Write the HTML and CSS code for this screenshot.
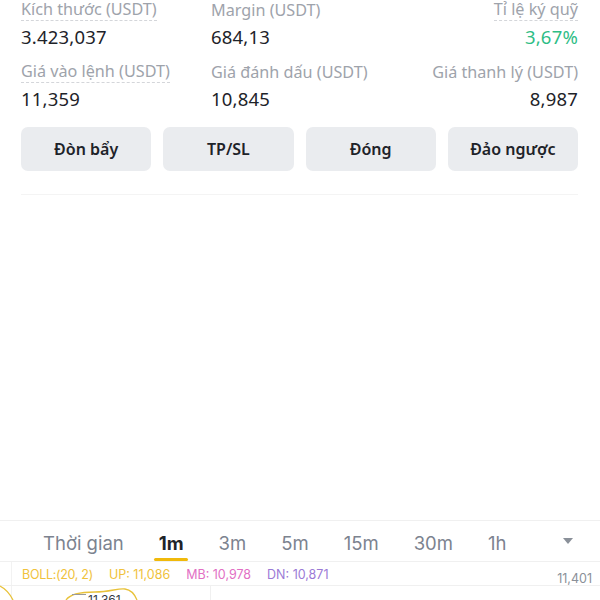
FILE: index.html
```html
<!DOCTYPE html>
<html lang="vi">
<head>
<meta charset="utf-8">
<link rel="stylesheet" href="styles.css">
</head>
<body>
<div class="page">
  <section class="stats">
    <div class="stat">
      <div class="label dotted">Kích thước (USDT)</div>
      <div class="value">3.423,037</div>
    </div>
    <div class="stat">
      <div class="label">Margin (USDT)</div>
      <div class="value">684,13</div>
    </div>
    <div class="stat right">
      <div class="label dotted">Tỉ lệ ký quỹ</div>
      <div class="value green">3,67%</div>
    </div>
    <div class="stat">
      <div class="label dotted">Giá vào lệnh (USDT)</div>
      <div class="value">11,359</div>
    </div>
    <div class="stat">
      <div class="label">Giá đánh dấu (USDT)</div>
      <div class="value">10,845</div>
    </div>
    <div class="stat right">
      <div class="label">Giá thanh lý (USDT)</div>
      <div class="value">8,987</div>
    </div>
  </section>
  <section class="actions">
    <button class="btn">Đòn bẩy</button>
    <button class="btn">TP/SL</button>
    <button class="btn">Đóng</button>
    <button class="btn">Đảo ngược</button>
  </section>
  <div class="divider"></div>
  <div class="spacer"></div>
  <nav class="tabs">
    <span class="tab">Thời gian</span>
    <span class="tab active">1m</span>
    <span class="tab">3m</span>
    <span class="tab">5m</span>
    <span class="tab">15m</span>
    <span class="tab">30m</span>
    <span class="tab">1h</span>
    <span class="caret"></span>
  </nav>
  <div class="chart">
    <div class="legend">
      <span class="boll">BOLL:(20, 2)</span>
      <span class="boll">UP: 11,086</span>
      <span class="mb">MB: 10,978</span>
      <span class="dn">DN: 10,871</span>
    </div>
    <span class="axis-label">11,401</span>
    <svg class="plot" width="600" height="38" viewBox="0 0 600 38">
      <line x1="11.5" y1="0" x2="11.5" y2="38" stroke="#f2f2f2" stroke-width="1"/>
      <line x1="0" y1="23.5" x2="600" y2="23.5" stroke="#f0f0f0" stroke-width="1"/>
      <line x1="210.5" y1="23" x2="210.5" y2="38" stroke="#f0f0f0" stroke-width="1"/>
      <path d="M0 24 C6 27 10 32 13 38" fill="none" stroke="#e8c23a" stroke-width="1.3"/>
      <path d="M66 38 C70 32 80 30 95 30 C110 30 118 26 125 27 C132 28 135 33 137 38" fill="none" stroke="#e8c23a" stroke-width="1.3"/>
      <line x1="72" y1="32.5" x2="86" y2="32.5" stroke="#9a9a9a" stroke-width="1"/>
      <text x="88" y="42" class="price-tag">11,361</text>
    </svg>
  </div>
</div>
</body>
</html>
```
FILE: styles.css
```css
* { box-sizing: border-box; }
html, body { margin: 0; padding: 0; background: #ffffff; }
body {
  width: 600px;
  height: 600px;
  overflow: hidden;
  font-family: "Noto Sans", "Liberation Sans", sans-serif;
  color: #1e2329;
}
.page { display: flex; flex-direction: column; height: 600px; }

.stats {
  display: grid;
  grid-template-columns: 190px 1fr auto;
  row-gap: 9px;
  padding: 0 22px 0 21px;
  margin-top: -1px;
}
.stat { display: flex; flex-direction: column; align-items: flex-start; }
.stat.right { align-items: flex-end; }
.label {
  font-size: 16.2px;
  line-height: 22px;
  color: #9ea3ab;
}
.dotted { border-bottom: 1px dashed #d4d6da; line-height: 21px; }
.value {
  font-size: 18.5px;
  line-height: 30px;
  padding-top: 1px;
  color: #1e2329;
  letter-spacing: 0.2px;
}
.value.green { color: #2ebd85; }

.actions {
  display: grid;
  grid-template-columns: repeat(4, 1fr);
  gap: 12px;
  padding: 0 22px 0 21px;
  margin-top: 13px;
}
.btn {
  height: 44px;
  border: 0;
  border-radius: 7px;
  background: #eaecef;
  font-family: "Noto Sans", "Liberation Sans", sans-serif;
  font-size: 16px;
  font-weight: 600;
  color: #1e2329;
  padding: 0;
}

.divider {
  margin: 23px 22px 0 21px;
  height: 1px;
  background: #f4f4f4;
}
.spacer { flex: 1; }

.tabs {
  display: flex;
  align-items: center;
  gap: 35px;
  height: 42px;
  padding: 4px 27px 0 43px;
  border-top: 1px solid #f0f0f0;
  border-bottom: 1px solid #f0f0f0;
  font-family: "Inter", "Noto Sans", sans-serif;
  font-size: 18.5px;
  color: #7c838f;
}
.tab { position: relative; line-height: 24px; }
.tab.active { color: #1e2329; font-weight: 700; }
.tab.active::after {
  content: "";
  position: absolute;
  left: 50%;
  bottom: -6px;
  width: 34px;
  height: 3px;
  margin-left: -17px;
  border-radius: 2px;
  background: #f0b90b;
}
.caret {
  margin-left: auto;
  margin-top: -4px;
  width: 0;
  height: 0;
  border-left: 5px solid transparent;
  border-right: 5px solid transparent;
  border-top: 6px solid #8a9099;
}

.chart { position: relative; height: 38px; }
.legend {
  position: absolute;
  top: 5px;
  left: 22px;
  display: flex;
  gap: 16px;
  font-family: "Inter", "Noto Sans", sans-serif;
  font-size: 12.5px;
  line-height: 15px;
}
.boll { color: #f0c23c; }
.boll:first-child { letter-spacing: -0.3px; }
.mb { color: #e26fc4; }
.dn { color: #9b7ad6; }
.axis-label {
  position: absolute;
  top: 9px;
  right: 8px;
  font-family: "Inter", "Noto Sans", sans-serif;
  font-size: 12.5px;
  color: #8a9099;
}
.plot { display: block; }
.price-tag { font-family: "Inter", "Noto Sans", sans-serif; font-size: 12px; fill: #333a44; }
```
